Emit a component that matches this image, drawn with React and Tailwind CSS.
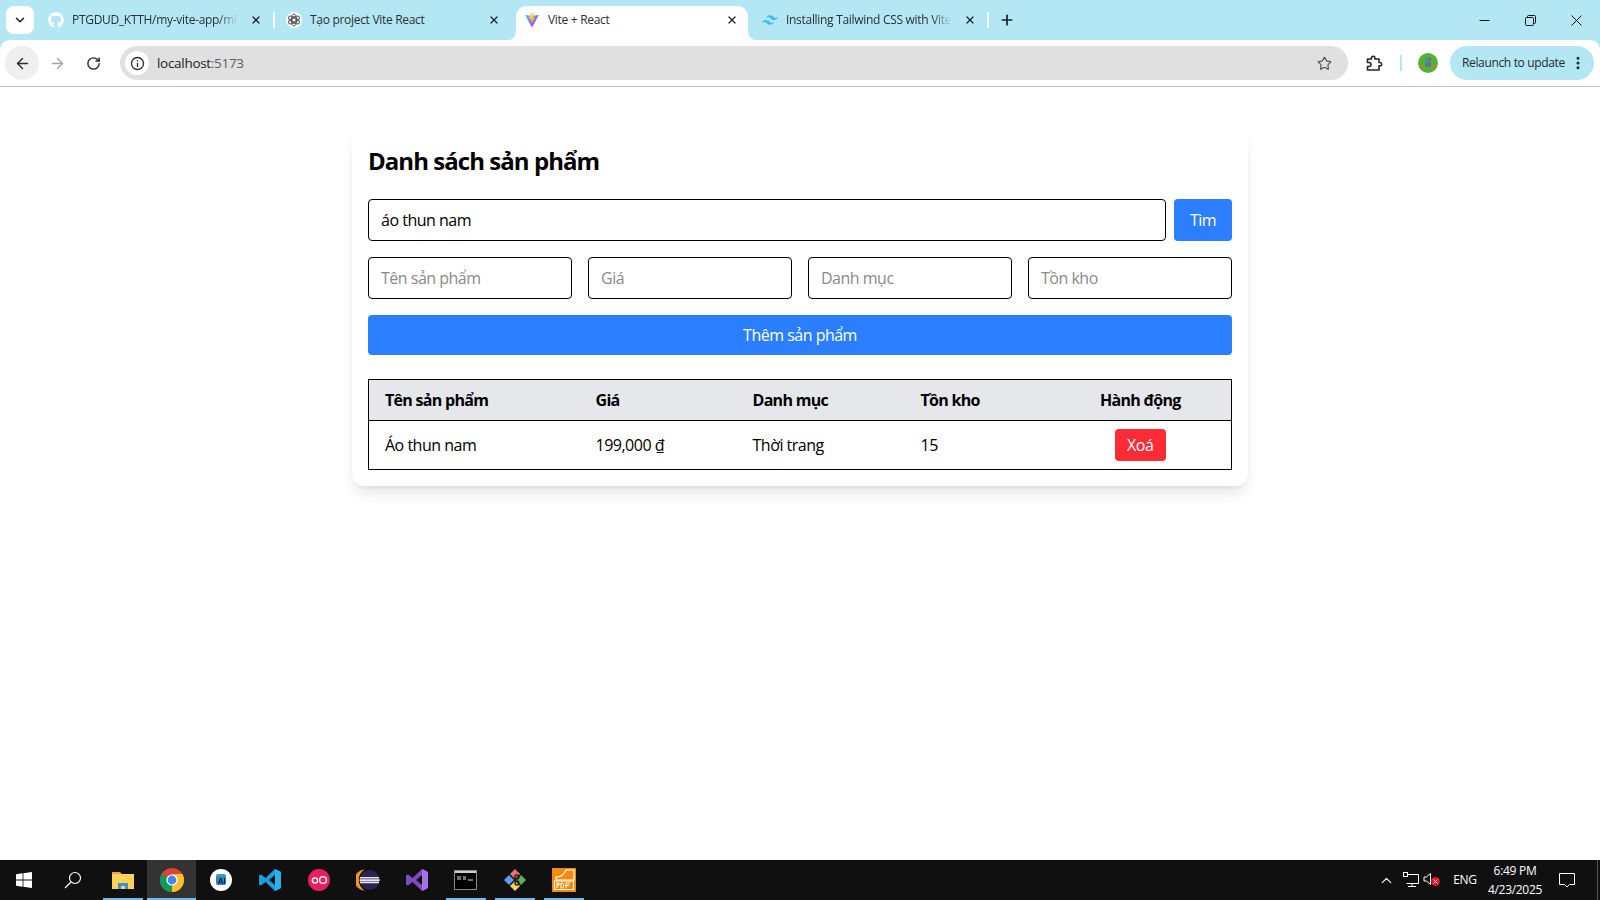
import React from "react";
import { ArrowLeft, ArrowRight, RotateCw, Star, Plus, X, ChevronDown, ChevronUp, EllipsisVertical } from "lucide-react";
import { FaGithub } from "react-icons/fa";
import { SiTailwindcss } from "react-icons/si";

const UI = { fontFamily: '"Open Sans", "Noto Sans", sans-serif' };

const ViteIcon = () => (
  <svg width="18" height="18" viewBox="0 0 18 18">
    <defs>
      <linearGradient id="vg" x1="0" y1="0" x2="0.6" y2="1"><stop offset="0" stopColor="#41d1ff" /><stop offset="1" stopColor="#bd34fe" /></linearGradient>
      <linearGradient id="vy" x1="0" y1="0" x2="0.3" y2="1"><stop offset="0" stopColor="#ffea83" /><stop offset="1" stopColor="#ffa800" /></linearGradient>
    </defs>
    <path d="M1 3 L9 4.4 L17 3 L9.3 17 Q9 17.6 8.7 17 Z" fill="url(#vg)" />
    <path d="M12 1 L6.5 2 L6.2 8 L8 7.6 L7.6 10.5 L9 10 L8.8 13 L12.4 6.4 L10.4 6.8 Z" fill="url(#vy)" />
  </svg>
);

const OpenAiIcon = () => (
  <span className="w-4 h-4 rounded-full bg-white flex items-center justify-center">
    <svg width="14" height="14" viewBox="0 0 14 14" fill="none" stroke="#555" strokeWidth="1">
      <circle cx="7" cy="7" r="2" />
      <ellipse cx="7" cy="7" rx="2.6" ry="6" />
      <ellipse cx="7" cy="7" rx="2.6" ry="6" transform="rotate(60 7 7)" />
      <ellipse cx="7" cy="7" rx="2.6" ry="6" transform="rotate(120 7 7)" />
    </svg>
  </span>
);

function Tab({ w, pl, icon, title, active, fade, sep, textW, closeGap }) {
  return (
    <div className={`relative h-[34px] mt-[6px] shrink-0 ${active ? "bg-white rounded-t-[10px]" : ""}`} style={{ width: w }}>
      <div className="h-7 flex items-center" style={{ paddingLeft: pl }}>
        <span className="w-4 h-4 flex items-center justify-center shrink-0">{icon}</span>
        <span
          className={`ml-2 text-[12px] leading-4 whitespace-nowrap overflow-hidden tracking-[-0.3px] text-[#2a2f33] ${fade ? "[mask-image:linear-gradient(to_right,black_88%,transparent)]" : ""}`}
          style={{ width: textW }}
        >
          {title}
        </span>
        <X size={12} strokeWidth={2.6} className="text-[#1f2326] shrink-0" style={{ marginLeft: closeGap }} />
      </div>
      {sep && <span className="absolute right-0 top-[6px] h-4 w-[2px] bg-white" />}
      {active && (
        <>
          <span className="absolute -left-2 bottom-0 w-2 h-2 bg-white" />
          <span className="absolute -left-2 bottom-0 w-2 h-2 bg-[#b4e7f4] rounded-br-[8px]" />
          <span className="absolute -right-2 bottom-0 w-2 h-2 bg-white" />
          <span className="absolute -right-2 bottom-0 w-2 h-2 bg-[#b4e7f4] rounded-bl-[8px]" />
        </>
      )}
    </div>
  );
}

function TabStrip() {
  return (
    <div className="h-10 bg-[#b4e7f4] flex items-start pl-[6px]">
      <div className="w-7 h-7 mt-[6px] bg-white rounded-lg flex items-center justify-center mr-[6px] shrink-0">
        <ChevronDown size={14} strokeWidth={2.6} className="text-[#1f2326]" />
      </div>
      <Tab w={235} pl={8} icon={<FaGithub size={16} className="text-white" />} title="PTGDUD_KTTH/my-vite-app/mi" fade sep textW={166} closeGap={12} />
      <Tab w={241} pl={11} icon={<OpenAiIcon />} title="Tạo project Vite React" textW={170} closeGap={8} />
      <Tab w={232} pl={8} icon={<ViteIcon />} title="Vite + React" active textW={170} closeGap={8} />
      <Tab w={241} pl={14} icon={<SiTailwindcss size={16} className="text-[#38bdf8]" />} title="Installing Tailwind CSS with Vite" fade sep textW={166} closeGap={12} />
      <div className="h-7 mt-[6px] w-[35px] flex items-center justify-center shrink-0">
        <Plus size={16} strokeWidth={2.6} className="text-[#1f2326]" />
      </div>
      <div className="flex-1" />
      <div className="h-10 flex items-center">
        <div className="w-[46px] flex justify-center">
          <svg width="11" height="11" viewBox="0 0 11 11"><path d="M0.5 5.5H10.5" stroke="#111" /></svg>
        </div>
        <div className="w-[46px] flex justify-center">
          <svg width="11" height="11" viewBox="0 0 11 11" fill="none" stroke="#111"><rect x="0.5" y="2.5" width="8" height="8" rx="1" /><path d="M2.5 2.5V1.5a1 1 0 0 1 1-1h6a1 1 0 0 1 1 1v6a1 1 0 0 1-1 1H8.5" /></svg>
        </div>
        <div className="w-[46px] flex justify-center mr-[1px]">
          <svg width="11" height="11" viewBox="0 0 11 11"><path d="M0.5 0.5L10.5 10.5M10.5 0.5L0.5 10.5" stroke="#111" /></svg>
        </div>
      </div>
    </div>
  );
}

function Toolbar() {
  return (
    <div className="bg-[#b4e7f4]">
      <div className="h-[47px] bg-white rounded-t-[10px] border-b border-[#c8c8c8] flex items-start pt-[6px] pl-[5px] pr-[6px]">
        <div className="w-[34px] h-[34px] rounded-full bg-[#efefef] flex items-center justify-center shrink-0">
          <ArrowLeft size={17} strokeWidth={2} className="text-[#2b2f33]" />
        </div>
        <div className="w-9 h-[34px] flex items-center justify-center shrink-0">
          <ArrowRight size={17} strokeWidth={2} className="text-[#a4a4a4]" />
        </div>
        <div className="w-9 h-[34px] pl-[1px] flex items-center justify-center shrink-0">
          <RotateCw size={15} strokeWidth={2.3} className="text-[#2b2f33]" />
        </div>
        <div className="ml-[9px] h-[34px] w-[1228px] rounded-full bg-[#e0e0e0] flex items-center pl-[5px] pr-[16px] shrink-0">
          <div className="w-6 h-6 rounded-full bg-white flex items-center justify-center">
            <svg width="15" height="15" viewBox="0 0 15 15" fill="none" stroke="#2b2f33" strokeWidth="1.3"><circle cx="7.5" cy="7.5" r="6" /><path d="M7.5 6.8V11M7.5 4V5.3" /></svg>
          </div>
          <span className="ml-2 text-[13.5px] tracking-[-0.3px] text-[#1f2326]">localhost<span className="text-[#5a5f63]">:5173</span></span>
          <div className="flex-1" />
          <Star size={15} strokeWidth={1.8} className="text-[#4a4d50]" />
        </div>
        <div className="w-[52px] h-[34px] flex items-center justify-center shrink-0">
          <svg width="17" height="17" viewBox="0 0 17 17" fill="none" stroke="#23272a" strokeWidth="1.6" strokeLinejoin="round">
            <path d="M1.5 4H5.5V3a1.7 1.7 0 0 1 3.4 0v1H13V7.5h1a1.7 1.7 0 0 1 0 3.4h-1V15H1.5V11.5H3a2 2 0 0 0 0-4H1.5Z" />
          </svg>
        </div>
        <div className="w-[2px] h-4 mt-[9px] bg-[#b4e7f4] shrink-0" />
        <div className="w-12 h-[34px] pl-4 flex items-center shrink-0">
          <svg width="20" height="20" viewBox="0 0 20 20">
            <circle cx="10" cy="10" r="10" fill="#4fb52f" />
            <rect x="1" y="12" width="18" height="2" fill="#e2752c" />
            <circle cx="10" cy="7" r="3" fill="#4b8fa8" />
            <rect x="7" y="9" width="6" height="5" fill="#4b7f9c" />
            <rect x="11" y="5" width="2" height="2" fill="#c23b3b" />
          </svg>
        </div>
        <div className="w-[144px] h-[34px] rounded-full bg-[#b4e7f4] flex items-center pl-3 shrink-0">
          <span className="text-[12px] tracking-[-0.35px] text-[#1f2a30] whitespace-nowrap">Relaunch to update</span>
          <EllipsisVertical size={16} strokeWidth={2.6} className="text-[#1f2a30] ml-[5px] shrink-0" />
        </div>
      </div>
    </div>
  );
}

const inputCls = "min-w-0 w-full h-[42px] px-3 border border-black rounded text-[16px] text-black bg-white placeholder:text-[#8a8a8a] tracking-[-0.5px] outline-none";

function Card() {
  return (
    <div className="w-[896px] mx-auto mt-10 p-4 bg-white rounded-xl shadow-lg text-black tracking-[-0.5px]">
      <h1 className="text-2xl font-bold mb-5 leading-9 tracking-[-0.95px]">Danh sách sản phẩm</h1>
      <div className="flex gap-2 mb-4">
        <input className={inputCls + " flex-1"} readOnly value="áo thun nam" />
        <button className="w-[58px] h-[42px] bg-[#2b7fff] text-white rounded shrink-0">Tìm</button>
      </div>
      <div className="grid grid-cols-4 gap-4 mb-4">
        <input className={inputCls} readOnly placeholder="Tên sản phẩm" />
        <input className={inputCls} readOnly placeholder="Giá" />
        <input className={inputCls} readOnly placeholder="Danh mục" />
        <input className={inputCls} readOnly placeholder="Tồn kho" />
      </div>
      <button className="w-full h-10 bg-[#2b7fff] text-white rounded mb-6">Thêm sản phẩm</button>
      <table className="w-full table-fixed border-collapse border border-black">
        <colgroup>
          <col className="w-[211px]" />
          <col className="w-[157px]" />
          <col className="w-[168px]" />
          <col className="w-[145px]" />
          <col />
        </colgroup>
        <thead>
          <tr className="bg-[#e5e7eb] border-b border-black tracking-[-0.7px]">
            <th className="px-4 py-2 text-left font-bold">Tên sản phẩm</th>
            <th className="px-4 py-2 text-left font-bold">Giá</th>
            <th className="px-4 py-2 text-left font-bold">Danh mục</th>
            <th className="px-4 py-2 text-left font-bold">Tồn kho</th>
            <th className="px-4 py-2 text-center font-bold">Hành động</th>
          </tr>
        </thead>
        <tbody>
          <tr>
            <td className="px-4 py-2">Áo thun nam</td>
            <td className="px-4 py-2">199,000 ₫</td>
            <td className="px-4 py-2">Thời trang</td>
            <td className="px-4 py-2">15</td>
            <td className="px-4 py-2 text-center">
              <button className="h-8 w-[51px] bg-[#fb2c36] text-white rounded align-middle">Xoá</button>
            </td>
          </tr>
        </tbody>
      </table>
    </div>
  );
}

const Slot = ({ children, on, hl }) => (
  <div className={`relative w-[49px] h-10 flex items-center justify-center shrink-0 ${hl ? "bg-[#333333]" : ""}`}>
    {children}
    {on && <span className={`absolute bottom-0 h-[2px] bg-[#76b9ed] ${hl ? "left-0 right-0" : "left-[5px] right-[4px]"}`} />}
  </div>
);

function Taskbar() {
  return (
    <div className="h-10 bg-[#101010] flex items-center shrink-0">
      <div className="w-12 h-10 flex items-center justify-center shrink-0">
        <svg width="16" height="16" viewBox="0 0 16 16" fill="#fff"><path d="M0 2.3L6.6 1.3V7.6H0ZM7.4 1.2L16 0V7.6H7.4ZM0 8.4H6.6V14.7L0 13.7ZM7.4 8.4H16V16L7.4 14.8Z" /></svg>
      </div>
      <div className="w-[50px] h-10 flex items-center justify-center shrink-0">
        <svg width="18" height="18" viewBox="0 0 18 18" fill="none" stroke="#fff" strokeWidth="1.2"><circle cx="11" cy="7" r="5.5" /><path d="M7 11L1 17" /></svg>
      </div>
      <Slot on>
        <svg width="22" height="20" viewBox="0 0 22 20"><path d="M0 2h8l2 2h12v3H0Z" fill="#e8a92c" /><rect y="4" width="22" height="15" fill="#fbd35b" /><path d="M6 19v-6h10v6h-3v-3H9v3Z" fill="#3a8fd6" /></svg>
      </Slot>
      <Slot on hl>
        <svg width="24" height="24" viewBox="0 0 24 24">
          <circle cx="12" cy="12" r="12" fill="#db4437" />
          <path d="M12 12 L1.6 6 A12 12 0 0 0 12 24 Z" fill="#0f9d58" />
          <path d="M12 12 L12 24 A12 12 0 0 0 22.4 6 L12 6 Z" fill="#fbc02d" />
          <circle cx="12" cy="12" r="5.6" fill="#fff" />
          <circle cx="12" cy="12" r="4.4" fill="#4285f4" />
        </svg>
      </Slot>
      <Slot>
        <svg width="22" height="22" viewBox="0 0 22 22">
          <circle cx="11" cy="11" r="11" fill="#fff" />
          <path d="M6 8a3 3 0 0 1 3-3h4a3 3 0 0 1 3 3v6a2 2 0 0 1-2 2H8a2 2 0 0 1-2-2Z" fill="#2f7de0" />
          <path d="M6 8a3 3 0 0 1 3-3h4a3 3 0 0 1 3 3H6Z" fill="#33a87a" />
          <path d="M8 15L10 9h1.4L13.4 15h-1.2l-.4-1.4H9.6L9.2 15ZM10 12.6h1.4L10.7 10.4ZM14 9h1v6h-1Z" fill="#123" />
        </svg>
      </Slot>
      <Slot on={false}>
        <svg width="24" height="24" viewBox="0 0 24 24">
          <path d="M17 1L23 4V20L17 23L7.5 14L3 17.5L1 16.5V7.5L3 6.5L7.5 10ZM17 7L11 12L17 17Z" fill="#1b9de2" />
          <path d="M17 1L23 4V20L17 23Z" fill="#2bb0f0" />
        </svg>
      </Slot>
      <Slot>
        <div className="w-[22px] h-[22px] rounded-full bg-[#e91e63] flex items-center justify-center">
          <svg width="18" height="10" viewBox="0 0 18 10" fill="none" stroke="#fff" strokeWidth="1.4"><circle cx="5" cy="5.5" r="2.6" /><circle cx="13" cy="5" r="3.4" /></svg>
        </div>
      </Slot>
      <Slot>
        <svg width="24" height="24" viewBox="0 0 24 24">
          <path d="M9 1.5A10.5 10.5 0 0 0 9 22.5A12 12 0 0 1 9 1.5Z" fill="#f7941e" />
          <circle cx="13.5" cy="12" r="10" fill="#2c2255" />
          <path d="M4 9h19v1.6H4ZM3.6 11.3h20v1.6h-20ZM4 13.6h19v1.6H4Z" fill="#e8e6f2" />
        </svg>
      </Slot>
      <Slot>
        <svg width="24" height="24" viewBox="0 0 24 24">
          <path d="M17 1L23 4V20L17 23L7.5 14L3 17.5L1 16.5V7.5L3 6.5L7.5 10ZM17 7L11 12L17 17Z" fill="#7d4cc4" />
          <path d="M17 1L23 4V20L17 23Z" fill="#a374e3" />
        </svg>
      </Slot>
      <Slot on>
        <svg width="23" height="20" viewBox="0 0 23 20">
          <rect x="0.5" y="0.5" width="22" height="19" fill="#000" stroke="#888" />
          <rect x="1" y="1" width="21" height="2" fill="#cfcfcf" />
          <path d="M3 7h4M3 9h4M9 7h3M9 9h3M14 10h5" stroke="#ddd" />
        </svg>
      </Slot>
      <Slot on>
        <svg width="24" height="24" viewBox="0 0 24 24">
          <path d="M12 1l5 5-5 5-5-5Z" fill="#ef6f6c" />
          <path d="M18 7l5 5-5 5-5-5Z" fill="#5ab55a" />
          <path d="M12 13l5 5-5 5-5-5Z" fill="#f4d35e" />
          <path d="M6 7l5 5-5 5-5-5Z" fill="#5b9df0" />
          <circle cx="14" cy="9" r="2" fill="none" stroke="#222" strokeWidth="1.4" />
          <circle cx="14" cy="15" r="2" fill="none" stroke="#222" strokeWidth="1.4" />
        </svg>
      </Slot>
      <Slot on>
        <svg width="24" height="24" viewBox="0 0 24 24">
          <rect width="24" height="24" fill="#f58a0b" />
          <path d="M14 2H22V12H4V9C9 9 12 7 14 2Z" fill="none" stroke="#fff" strokeWidth="1.2" />
          <rect x="2.5" y="13" width="19" height="8.5" fill="none" stroke="#fff" />
          <path d="M5 20V15h2v2H5M9 15v5h1.5l1-1v-3l-1-1ZM14 20v-5h4M14 17.5h3" fill="none" stroke="#fff" strokeWidth="1" />
        </svg>
      </Slot>
      <div className="flex-1" />
      <div className="flex items-center h-10 text-white pr-[2px]">
        <ChevronUp size={17} strokeWidth={1.5} className="mr-2" />
        <svg width="16" height="16" viewBox="0 0 16 16" fill="none" stroke="#fff" className="mr-1"><path d="M3.5 2.5H15.5V11.5H3.5M9 11.5V14.5M5 14.5H13" /><rect x="0.5" y="0.5" width="4" height="4" fill="#101010" /></svg>
        <span className="relative w-[17px] h-4 mr-[13px] block">
          <svg width="10" height="14" viewBox="0 0 10 14" fill="none" stroke="#fff"><path d="M1 5H3.5L7.5 1.5V12.5L3.5 9H1Z" /></svg>
          <span className="absolute left-[8px] top-[5px] w-[9px] h-[9px] rounded-full bg-[#e81123] flex items-center justify-center"><X size={7} strokeWidth={3} /></span>
        </span>
        <span className="text-[12px] w-6 text-center mr-2 whitespace-nowrap tracking-[-0.3px]" style={UI}>ENG</span>
        <div className="w-[60px] flex flex-col items-center text-[12px] leading-[19px] tracking-[-0.3px]" style={UI}>
          <span>6:49 PM</span>
          <span>4/23/2025</span>
        </div>
        <div className="w-11 flex justify-center">
          <svg width="16" height="16" viewBox="0 0 16 16" fill="none" stroke="#fff"><path d="M0.5 1.5H15.5V12.5H10.5L8 15L5.5 12.5H0.5Z" /></svg>
        </div>
        <div className="w-[1px] h-10 ml-2 bg-[#555]" />
      </div>
    </div>
  );
}

export default function App() {
  return (
    <div className="h-screen flex flex-col bg-white overflow-hidden" style={UI}>
      <TabStrip />
      <Toolbar />
      <main className="flex-1 min-h-0"><Card /></main>
      <Taskbar />
    </div>
  );
}
